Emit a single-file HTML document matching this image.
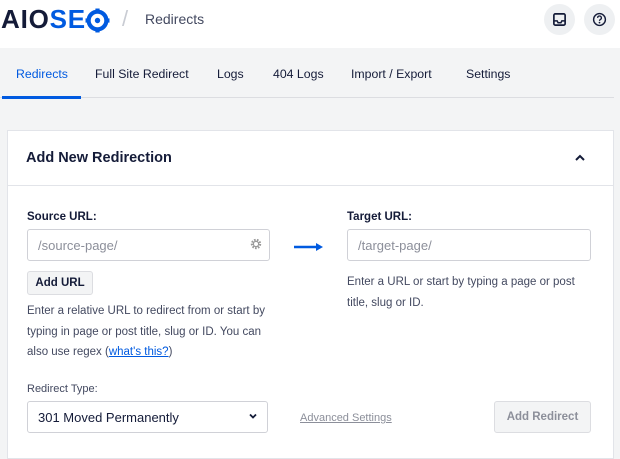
<html><head><style>
*{box-sizing:border-box;margin:0;padding:0}
body{width:620px;height:459px;overflow:hidden;background:#f3f4f5;font-family:"Liberation Sans",sans-serif;color:#141b38;position:relative}
.hdr{position:absolute;left:0;top:0;width:620px;height:48px;background:#fff}
.abs{position:absolute;white-space:nowrap}
.tab{position:absolute;top:67px;font-size:12.3px;color:#141b38}
.circ{position:absolute;width:31px;height:31px;border-radius:50%;background:#eef0f2}
.card{position:absolute;left:7px;top:130px;width:607px;height:329px;background:#fff;border:1px solid #e2e4e9}
.input{position:absolute;height:32px;border:1px solid #d0d1d7;border-radius:3px;background:#fff;font-size:13px;color:#8c8f9a;padding:8px 10px}
.p{font-size:11.5px;color:#434960;line-height:20.5px;position:absolute}
.lbl{position:absolute;font-size:11.5px;font-weight:bold;color:#141b38}
</style></head><body>
<div class="hdr"></div>
<div class="abs" style="left:1px;top:4px;font-size:26px;font-weight:bold;letter-spacing:0.8px;color:#141b38">AIO<span style="color:#005ae0">SE</span></div>
<svg class="abs" style="left:85px;top:8px" width="25" height="25" viewBox="0 0 24 24"><circle cx="12" cy="12" r="8.5" fill="none" stroke="#005ae0" stroke-width="4"/><circle cx="12" cy="12" r="2.6" fill="#005ae0"/><g fill="#005ae0"><rect x="10" y="0.5" width="4" height="3"/><rect x="10" y="20.5" width="4" height="3"/><rect x="0.5" y="10" width="3" height="4"/><rect x="20.5" y="10" width="3" height="4"/></g></svg>
<div class="abs" style="left:122px;top:6px;font-size:22px;color:#c9ccd3">/</div>
<div class="abs" style="left:145px;top:11px;font-size:14px;color:#434960">Redirects</div>
<div class="circ" style="left:544px;top:4px"></div>
<svg class="abs" style="left:552px;top:12px" width="15" height="15" viewBox="0 0 16 16"><rect x="2" y="2" width="12" height="12" rx="1.5" fill="none" stroke="#141b38" stroke-width="1.8"/><path d="M2 9.5h3.5l1 2h3l1-2H14" fill="none" stroke="#141b38" stroke-width="1.6"/></svg>
<div class="circ" style="left:584px;top:4px"></div>
<svg class="abs" style="left:592px;top:12px" width="15" height="15" viewBox="0 0 16 16"><circle cx="8" cy="8" r="6.3" fill="none" stroke="#141b38" stroke-width="1.5"/><path d="M6 6.3a2 2 0 1 1 2.8 1.8c-.6.3-.8.7-.8 1.3" fill="none" stroke="#141b38" stroke-width="1.4"/><circle cx="8" cy="11.3" r=".9" fill="#141b38"/></svg>
<div style="position:absolute;left:0;top:97px;width:614px;height:1px;background:#dcdde1"></div>
<div class="tab" style="left:16px;color:#005ae0">Redirects</div>
<div style="position:absolute;left:2px;top:96px;width:79px;height:3px;background:#005ae0"></div>
<div class="tab" style="left:95px">Full Site Redirect</div>
<div class="tab" style="left:217px">Logs</div>
<div class="tab" style="left:273px">404 Logs</div>
<div class="tab" style="left:351px">Import / Export</div>
<div class="tab" style="left:466px">Settings</div>
<div class="card">
<div style="position:absolute;left:0;top:54px;width:605px;height:1px;background:#e2e4e9"></div>
<div class="abs" style="left:18px;top:19px;font-size:14.5px;font-weight:bold;color:#141b38">Add New Redirection</div>
<svg class="abs" style="left:566px;top:22px" width="12" height="10" viewBox="0 0 12 10"><path d="M2 7l4-4 4 4" fill="none" stroke="#141b38" stroke-width="2"/></svg>
<div class="lbl" style="left:19px;top:80px">Source URL:</div>
<div class="input" style="left:19px;top:98px;width:243px">/source-page/</div>
<svg class="abs" style="left:242px;top:107px" width="12" height="12" viewBox="0 0 12 12"><circle cx="6" cy="6" r="4" fill="none" stroke="#999" stroke-width="2.4" stroke-dasharray="1.6 1.2"/><circle cx="6" cy="6" r="2.6" fill="none" stroke="#999" stroke-width="1.2"/></svg>
<div class="abs" style="left:19px;top:140px;width:66px;height:24px;background:#f3f4f5;border:1px solid #dcdde1;border-radius:3px;font-size:11.5px;font-weight:bold;text-align:center;line-height:22px">Add URL</div>
<div class="p" style="left:19px;top:170px;width:250px">Enter a relative URL to redirect from or start by typing in page or post title, slug or ID. You can also use regex (<span style="color:#005ae0;text-decoration:underline">what's this?</span>)</div>
<div class="abs" style="left:19px;top:252px;font-size:11px;color:#434960">Redirect Type:</div>
<div class="input" style="left:19px;top:270px;width:241px;color:#141b38;font-size:13px">301 Moved Permanently</div>
<svg class="abs" style="left:240px;top:281px" width="10" height="8" viewBox="0 0 10 8"><path d="M2 2.5l3 3 3-3" fill="none" stroke="#141b38" stroke-width="1.8"/></svg>
<svg class="abs" style="left:286px;top:111px" width="30" height="10" viewBox="0 0 30 10"><path d="M0 5h23" stroke="#005ae0" stroke-width="2.5"/><path d="M22 1l7 4-7 4z" fill="#005ae0"/></svg>
<div class="lbl" style="left:339px;top:80px">Target URL:</div>
<div class="input" style="left:339px;top:98px;width:244px">/target-page/</div>
<div class="p" style="left:339px;top:141px;width:240px">Enter a URL or start by typing a page or post title, slug or ID.</div>
<div class="abs" style="left:292px;top:281px;font-size:11px;color:#8c8f9a;text-decoration:underline">Advanced Settings</div>
<div class="abs" style="left:486px;top:270px;width:97px;height:32px;background:#f3f4f5;border:1px solid #dcdde1;border-radius:3px;font-size:11.5px;font-weight:bold;color:#8c8f9a;text-align:center;line-height:30px">Add Redirect</div>
</div>
</body></html>
